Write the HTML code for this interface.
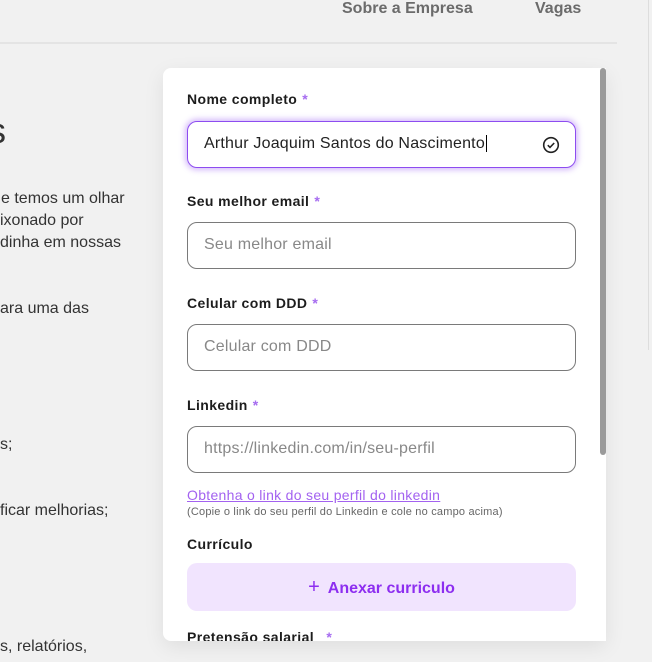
<!DOCTYPE html>
<html><head><meta charset="utf-8"><style>
*{box-sizing:border-box;margin:0;padding:0}
body{width:652px;height:662px;overflow:hidden;background:#f1f1f1;font-family:"Liberation Sans","DejaVu Sans",sans-serif;position:relative;color:#222}
.nav{position:absolute;top:0;font-weight:bold;color:#6b6b6b;font-size:16px}
.hr{position:absolute;left:0;top:42px;width:617px;height:2px;background:#e4e4e4}
.vl{position:absolute;left:648px;top:0;width:1px;height:350px;background:#ddd}
.lt{position:absolute;left:0;font-size:16px;color:#333;white-space:nowrap}
.card{position:absolute;left:163px;top:68px;width:443px;height:573px;background:#fff;border-radius:8px 0 0 8px;box-shadow:0 6px 20px rgba(0,0,0,.08);overflow:hidden}
.sb{position:absolute;left:600px;top:68px;width:6px;height:387px;background:#9a9a9a;border-radius:3px}
.lab{position:absolute;left:24px;font-weight:bold;font-size:14px;color:#1d1d1d;letter-spacing:.4px}
.lab b{color:#a66cf0;margin-left:5px}
.inp{position:absolute;left:24px;width:389px;height:47px;border:1px solid #7a7a7a;border-radius:10px;font-size:16px;color:#888;padding:13px 16px;white-space:nowrap;letter-spacing:.2px}
.act{border:1.5px solid #8d4cf0;box-shadow:0 0 6px 2px rgba(160,100,245,.45);color:#222}
</style></head><body>
<div class="nav" style="left:342px">Sobre a Empresa</div>
<div class="nav" style="left:535px">Vagas</div>
<div class="hr"></div><div class="vl"></div>
<div class="lt" style="top:110px;left:-12px;font-size:36px">s</div>
<div class="lt" style="top:190px;left:1px">e temos um olhar</div>
<div class="lt" style="top:212px;left:0">ixonado por</div>
<div class="lt" style="top:234px;left:0">dinha em nossas</div>
<div class="lt" style="top:300px;left:0">ara uma das</div>
<div class="lt" style="top:436px;left:0">s;</div>
<div class="lt" style="top:502px;left:0">ficar melhorias;</div>
<div class="lt" style="top:638px;left:0">s, relatórios,</div>
<div class="card">
<div class="lab" style="top:23px">Nome completo<b>*</b></div>
<div class="inp act" style="top:53px">Arthur Joaquim Santos do Nascimento<span style="border-left:1px solid #000;margin-left:1px"></span>
<svg style="position:absolute;right:15px;top:14px" width="18" height="18" viewBox="0 0 18 18"><circle cx="9" cy="9" r="7.3" fill="none" stroke="#222" stroke-width="1.6"/><path d="M5.8 9.2l2.2 2.2 4.2-4.4" fill="none" stroke="#222" stroke-width="1.6"/></svg></div>
<div class="lab" style="top:125px">Seu melhor email<b>*</b></div>
<div class="inp" style="top:154px">Seu melhor email</div>
<div class="lab" style="top:227px">Celular com DDD<b>*</b></div>
<div class="inp" style="top:256px">Celular com DDD</div>
<div class="lab" style="top:329px">Linkedin<b>*</b></div>
<div class="inp" style="top:358px">https://linkedin.com/in/seu-perfil</div>
<div style="position:absolute;left:24px;top:419px;font-size:14px;color:#a362f0;text-decoration:underline;letter-spacing:.3px">Obtenha o link do seu perfil do linkedin</div>
<div style="position:absolute;left:24px;top:438px;font-size:11px;color:#666;letter-spacing:.2px">(Copie o link do seu perfil do Linkedin e cole no campo acima)</div>
<div class="lab" style="top:468px">Currículo</div>
<div style="position:absolute;left:24px;top:495px;width:389px;height:48px;border-radius:10px;background:#f1e4fe;color:#8d2ef0;font-weight:bold;font-size:16px;text-align:center;line-height:48px"><span style="font-weight:normal;font-size:20px;margin-right:8px">+</span>Anexar curriculo</div>
<div class="lab" style="top:561px">Pretensão salarial <b style="margin-left:8px">*</b></div>
</div>
<div class="sb"></div>
</body></html>
